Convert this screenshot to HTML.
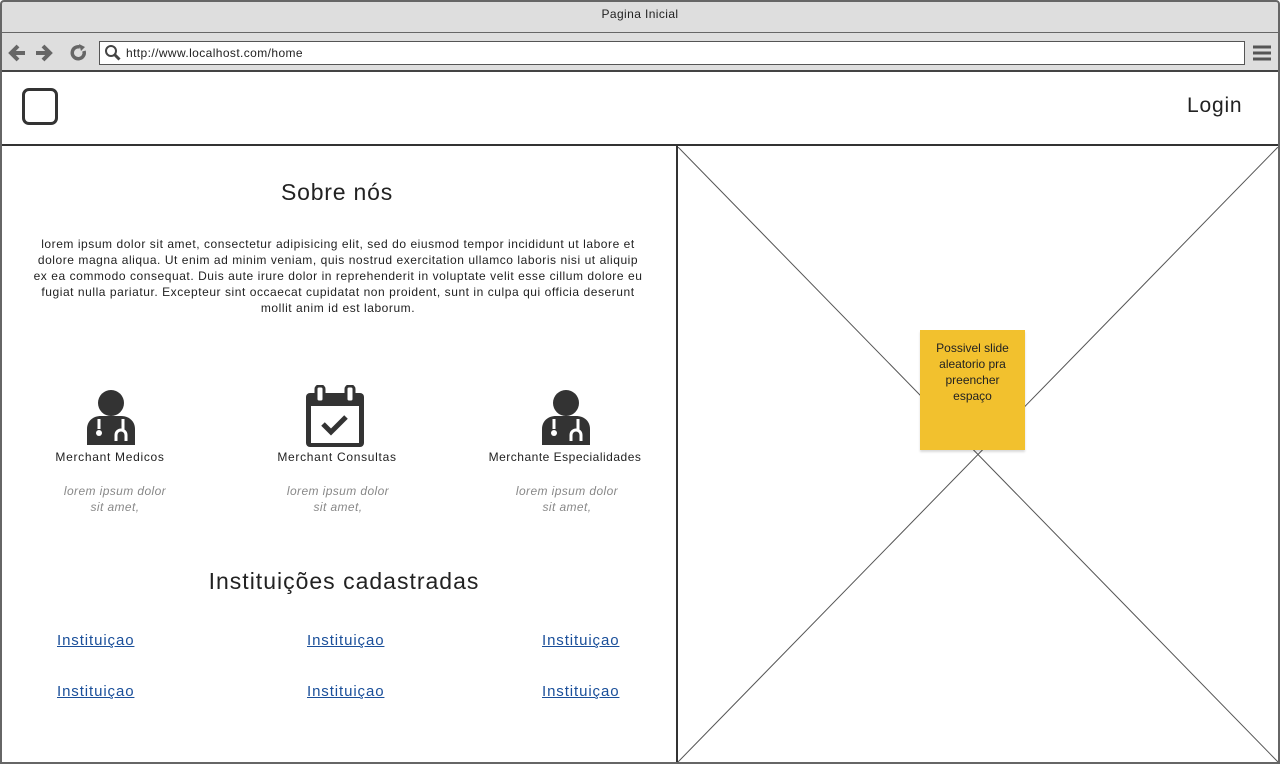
<!DOCTYPE html>
<html><head><meta charset="utf-8"><style>
*{margin:0;padding:0;box-sizing:border-box}
body{width:1280px;height:764px;background:#fff;font-family:"Liberation Sans",sans-serif;color:#222;position:relative;overflow:hidden;letter-spacing:.4px}
.abs{position:absolute}
.frame{left:0;top:0;width:1280px;height:764px;border:2px solid #666;border-radius:4px 4px 0 0}
.title{left:2px;top:2px;width:1276px;height:31px;background:#dedede;border-bottom:1px solid #666;text-align:center;font-size:12px;line-height:24px}
.tool{left:2px;top:33px;width:1276px;height:39px;background:#dedede;border-bottom:2px solid #444}
.url{left:99px;top:41px;width:1146px;height:24px;background:#fff;border:1px solid #555;font-size:12px;line-height:22px;padding-left:26px}
.nav{left:2px;top:72px;width:1276px;height:74px;border-bottom:2px solid #333}
.c{text-align:center}
a{color:#1a4f9a;text-decoration:underline;font-size:15px;letter-spacing:.9px}
.gray{color:#888;font-style:italic;font-size:12px;line-height:16px}
</style></head><body>
<div class="abs title">Pagina Inicial</div>
<div class="abs tool"></div>
<svg class="abs" style="left:8px;top:42px" width="80" height="22" viewBox="0 0 80 22">
<path d="M4 11h13M10 4l-7 7 7 7" stroke="#666" stroke-width="4" fill="none"/>
<path d="M28 11h13M35 4l7 7-7 7" stroke="#666" stroke-width="4" fill="none"/>
<path d="M72 5a6 6 0 1 0 4 4" stroke="#666" stroke-width="3.5" fill="none"/><path d="M71 2l6 3-4 4z" fill="#666"/>
</svg>
<div class="abs url">http://www.localhost.com/home</div>
<svg class="abs" style="left:104px;top:44px" width="18" height="18"><circle cx="7" cy="7" r="5" stroke="#444" stroke-width="2" fill="none"/><path d="M10.5 10.5l5 5" stroke="#444" stroke-width="3"/></svg>
<svg class="abs" style="left:1252px;top:44px" width="20" height="18"><path d="M1 3h18M1 9h18M1 15h18" stroke="#555" stroke-width="3"/></svg>
<div class="abs nav"></div>
<div class="abs" style="left:22px;top:88px;width:36px;height:37px;border:3px solid #333;border-radius:7px"></div>
<div class="abs" style="left:1187px;top:94px;font-size:21px;letter-spacing:.8px">Login</div>
<div class="abs" style="left:676px;top:146px;width:2px;height:618px;background:#333"></div>
<div class="abs" style="left:0;top:762px;width:1280px;height:2px;background:#333"></div>
<div class="abs frame"></div>
<svg class="abs" style="left:678px;top:147px" width="600" height="615"><path d="M0 0L600 615M600 0L0 615" stroke="#555" stroke-width="1"/></svg>
<div class="abs c" style="left:920px;top:330px;width:105px;height:120px;background:#f2c12e;font-size:12px;line-height:16px;padding:10px 6px;letter-spacing:0;box-shadow:0 2px 2px rgba(0,0,0,.15)">Possivel slide aleatorio pra preencher espaço</div>
<div class="abs c" style="left:0;top:179px;width:674px;font-size:23px;letter-spacing:.8px">Sobre nós</div>
<div class="abs c" style="left:30px;top:236px;width:616px;font-size:12px;line-height:16px;letter-spacing:.55px">lorem ipsum dolor sit amet, consectetur adipisicing elit, sed do eiusmod tempor incididunt ut labore et dolore magna aliqua. Ut enim ad minim veniam, quis nostrud exercitation ullamco laboris nisi ut aliquip ex ea commodo consequat. Duis aute irure dolor in reprehenderit in voluptate velit esse cillum dolore eu fugiat nulla pariatur. Excepteur sint occaecat cupidatat non proident, sunt in culpa qui officia deserunt mollit anim id est laborum.</div>
<svg class="abs" style="left:85px;top:389px" width="52" height="56" viewBox="0 0 52 56"><circle cx="26" cy="14" r="13" fill="#333"/><path d="M2 56V40c0-8 6-13 14-13h20c8 0 14 5 14 13v16z" fill="#333"/><circle cx="14" cy="44" r="3" fill="#fff"/><path d="M31 52v-6a5 5 0 0 1 10 0v6" stroke="#fff" stroke-width="3" fill="none"/><path d="M14 30v10M38 30v11" stroke="#fff" stroke-width="3"/></svg>
<svg class="abs" style="left:540px;top:389px" width="52" height="56" viewBox="0 0 52 56"><circle cx="26" cy="14" r="13" fill="#333"/><path d="M2 56V40c0-8 6-13 14-13h20c8 0 14 5 14 13v16z" fill="#333"/><circle cx="14" cy="44" r="3" fill="#fff"/><path d="M31 52v-6a5 5 0 0 1 10 0v6" stroke="#fff" stroke-width="3" fill="none"/><path d="M14 30v10M38 30v11" stroke="#fff" stroke-width="3"/></svg>
<svg class="abs" style="left:304px;top:385px" width="62" height="64" viewBox="0 0 62 64"><rect x="2" y="8" width="58" height="54" rx="4" fill="#333"/><rect x="7" y="21" width="48" height="37" fill="#fff"/><rect x="12" y="1" width="8" height="16" rx="3" fill="#fff" stroke="#333" stroke-width="3"/><rect x="42" y="1" width="8" height="16" rx="3" fill="#fff" stroke="#333" stroke-width="3"/><path d="M19 39l8 8 15-15" stroke="#333" stroke-width="5" fill="none"/></svg>
<div class="abs c" style="left:20px;top:450px;width:180px;font-size:12px;letter-spacing:.7px">Merchant Medicos</div>
<div class="abs c" style="left:247px;top:450px;width:180px;font-size:12px;letter-spacing:.7px">Merchant Consultas</div>
<div class="abs c" style="left:465px;top:450px;width:200px;font-size:12px;letter-spacing:.5px">Merchante Especialidades</div>
<div class="abs c gray" style="left:40px;top:483px;width:150px">lorem ipsum dolor<br>sit amet,</div>
<div class="abs c" style="left:0;top:568px;width:688px;font-size:23px;letter-spacing:1px">Instituições cadastradas</div>
<div class="abs c gray" style="left:263px;top:483px;width:150px">lorem ipsum dolor<br>sit amet,</div>
<div class="abs c gray" style="left:492px;top:483px;width:150px">lorem ipsum dolor<br>sit amet,</div>
<a class="abs" style="left:57px;top:632px">Instituiçao</a>
<a class="abs" style="left:307px;top:632px">Instituiçao</a>
<a class="abs" style="left:542px;top:632px">Instituiçao</a>
<a class="abs" style="left:57px;top:683px">Instituiçao</a>
<a class="abs" style="left:307px;top:683px">Instituiçao</a>
<a class="abs" style="left:542px;top:683px">Instituiçao</a>
</body></html>
